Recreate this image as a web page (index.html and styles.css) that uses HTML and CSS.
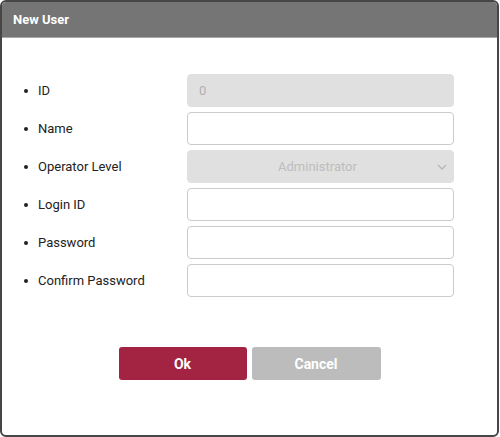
FILE: index.html
```html
<!DOCTYPE html>
<html>
<head>
<meta charset="utf-8">
<link rel="stylesheet" href="styles.css">
</head>
<body>
<div class="dialog">
  <div class="header">New User</div>
  <div class="content">
    <div class="form">
      <div class="row"><div class="label"><span class="dot"></span>ID</div><div class="field disabled"><span class="value">0</span></div></div>
      <div class="row"><div class="label"><span class="dot"></span>Name</div><div class="field"></div></div>
      <div class="row"><div class="label"><span class="dot"></span>Operator Level</div><div class="field disabled select"><span class="sel-text">Administrator</span><svg class="chev" width="10" height="6" viewBox="0 0 10 6"><path d="M1 1 L5 5 L9 1" fill="none" stroke="#b5b5b5" stroke-width="1.3"/></svg></div></div>
      <div class="row"><div class="label"><span class="dot"></span>Login ID</div><div class="field"></div></div>
      <div class="row"><div class="label"><span class="dot"></span>Password</div><div class="field"></div></div>
      <div class="row"><div class="label"><span class="dot"></span>Confirm Password</div><div class="field"></div></div>
    </div>
    <div class="buttons">
      <div class="btn ok">Ok</div>
      <div class="btn cancel">Cancel</div>
    </div>
  </div>
</div>
</body>
</html>
```
FILE: styles.css
```css
* { box-sizing: border-box; }
html, body { margin: 0; padding: 0; background: #fff; }
body { font-family: Roboto, "Liberation Sans", sans-serif; width: 500px; height: 437px; }
.dialog {
  width: 499px;
  height: 437px;
  border: 2px solid #464646;
  border-radius: 6px;
  overflow: hidden;
  display: flex;
  flex-direction: column;
}
.header {
  height: 36px;
  background: #757575;
  border-bottom: 1px solid #a8a8a8;
  color: #fff;
  font-weight: 700;
  font-size: 13px;
  padding-left: 11px;
  display: flex;
  align-items: center;
  padding-bottom: 1px;
}
.content { padding-top: 36px; }
.form { display: flex; flex-direction: column; gap: 5px; }
.row { display: flex; align-items: center; height: 33px; }
.label {
  width: 185px;
  padding-left: 22px;
  display: flex;
  align-items: center;
  font-size: 13px;
  color: #222;
}
.dot {
  width: 4px; height: 4px; border-radius: 50%;
  background: #222;
  margin-right: 10px;
}
.field {
  width: 267px;
  height: 33px;
  border: 1.5px solid #cbcbcb;
  border-radius: 4px;
  background: #fff;
  display: flex;
  align-items: center;
  position: relative;
}
.field.disabled { background: #e0e0e0; border-color: #e0e0e0; }
.value { color: #b0b0b0; font-size: 13px; padding-left: 11px; }
.select { justify-content: center; }
.sel-text { color: #bdbdbd; font-size: 13px; margin-left: -6px; }
.chev { position: absolute; right: 6px; top: 13px; }
.buttons { display: flex; justify-content: center; gap: 5px; margin-top: 50px; }
.btn {
  width: 128px;
  height: 33px;
  border-radius: 3px;
  color: #fff;
  font-weight: 700;
  font-size: 14px;
  display: flex;
  align-items: center;
  justify-content: center;
}
.ok { background: #a32442; }
.cancel { background: #bcbcbc; width: 129px; }
```
